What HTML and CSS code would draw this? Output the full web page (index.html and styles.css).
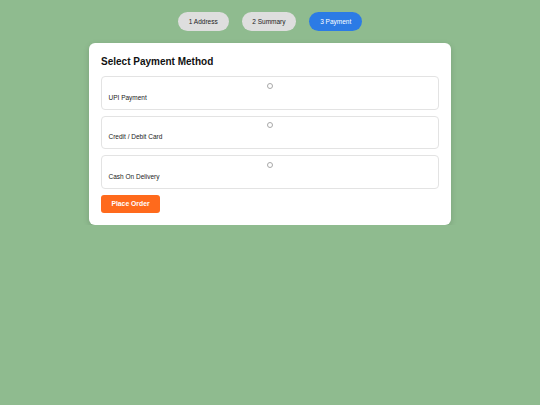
FILE: index.html
```html
<!DOCTYPE html>
<html>
<head>
<meta charset="utf-8">
<link rel="stylesheet" href="styles.css">
</head>
<body>
<div class="steps">
  <span class="step">1 Address</span>
  <span class="step">2 Summary</span>
  <span class="step active">3 Payment</span>
</div>
<div class="card">
  <h2 class="title">Select Payment Method</h2>
  <label class="option"><input type="radio" name="pm" class="radio"><span class="label">UPI Payment</span></label>
  <label class="option"><input type="radio" name="pm" class="radio"><span class="label">Credit / Debit Card</span></label>
  <label class="option"><input type="radio" name="pm" class="radio"><span class="label">Cash On Delivery</span></label>
  <button class="place">Place Order</button>
</div>
</body>
</html>
```
FILE: styles.css
```css
html, body {
  margin: 0;
  padding: 0;
  background: #8fbb8f;
  font-family: "Liberation Sans", Arial, sans-serif;
}
body {
  padding-top: 12px;
}
.steps {
  display: flex;
  justify-content: center;
  gap: 13px;
}
.step {
  display: inline-flex;
  align-items: center;
  justify-content: center;
  height: 18.5px;
  padding: 0 10.8px;
  border-radius: 9.5px;
  background: #dedede;
  color: #222;
  font-size: 6.5px;
}
.step.active {
  background: #2c7be5;
  color: #fff;
}
.card {
  box-sizing: border-box;
  width: 362px;
  margin: 12.5px auto 0;
  background: #fff;
  border-radius: 6px;
  padding: 12.5px 12px 12.5px;
  box-shadow: 0 2px 6px rgba(0,0,0,0.15);
  display: flex;
  flex-direction: column;
  gap: 6px;
}
.title {
  margin: 0 0 2.5px;
  font-size: 10px;
  font-weight: bold;
  color: #111;
  line-height: 12px;
}
.option {
  box-sizing: border-box;
  display: flex;
  flex-direction: column;
  border: 1px solid #e3e3e3;
  border-radius: 4px;
  padding: 5.5px 6.5px 0;
  height: 33.5px;
}
.radio {
  -webkit-appearance: none;
  appearance: none;
  display: block;
  box-sizing: border-box;
  margin: 0 auto;
  width: 6px;
  height: 6px;
  border: 1px solid #a8a8a8;
  border-radius: 50%;
  background: #fff;
}
.label {
  margin-top: 5px;
  font-size: 6.5px;
  color: #222;
  line-height: 8px;
}
.place {
  align-self: flex-start;
  margin-top: 0.5px;
  width: 59px;
  height: 17.5px;
  border: none;
  border-radius: 3px;
  background: #ff6a1c;
  color: #fff;
  font-family: "Liberation Sans", Arial, sans-serif;
  font-weight: bold;
  font-size: 6.8px;
  padding: 0;
}
```
